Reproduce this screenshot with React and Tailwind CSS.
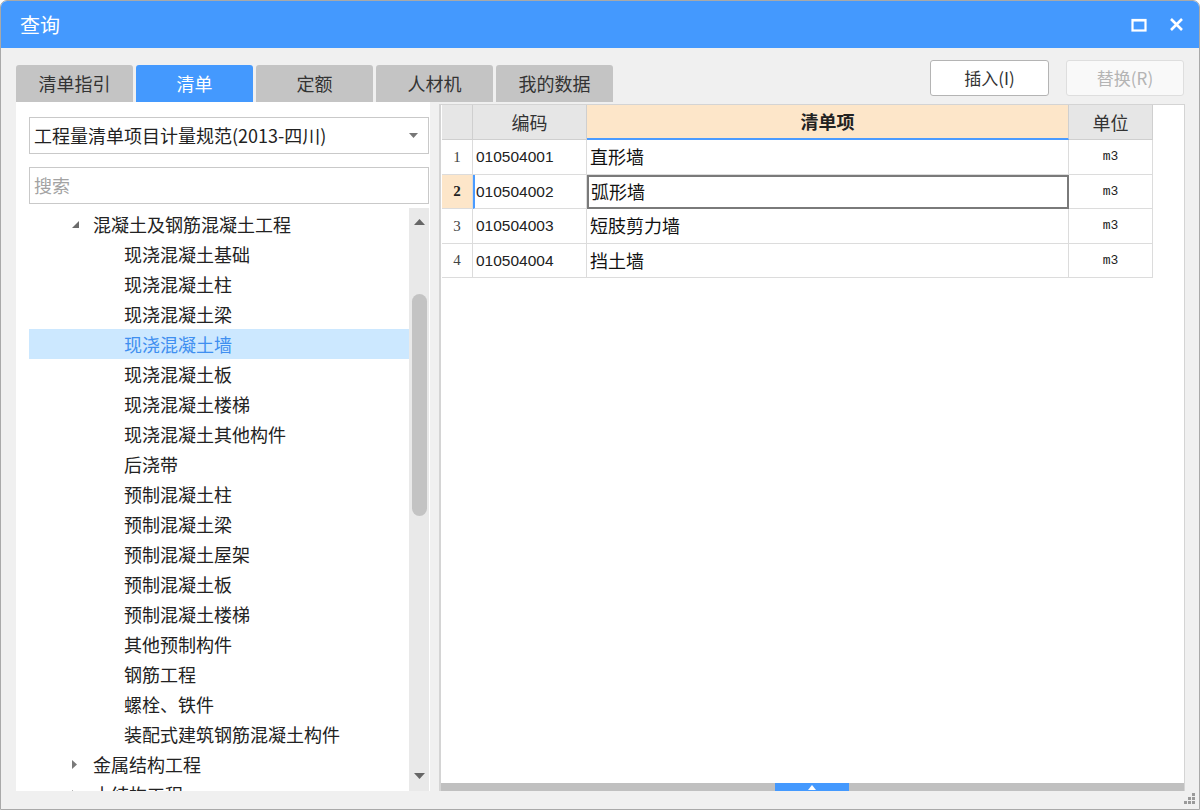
import React from 'react'

const cjk = { fontFamily: '"Noto Sans CJK SC", "Liberation Sans", sans-serif' }

const tabs = ['清单指引', '清单', '定额', '人材机', '我的数据']

const tree = [
  { label: '混凝土及钢筋混凝土工程', level: 1, open: true },
  { label: '现浇混凝土基础', level: 2 },
  { label: '现浇混凝土柱', level: 2 },
  { label: '现浇混凝土梁', level: 2 },
  { label: '现浇混凝土墙', level: 2, selected: true },
  { label: '现浇混凝土板', level: 2 },
  { label: '现浇混凝土楼梯', level: 2 },
  { label: '现浇混凝土其他构件', level: 2 },
  { label: '后浇带', level: 2 },
  { label: '预制混凝土柱', level: 2 },
  { label: '预制混凝土梁', level: 2 },
  { label: '预制混凝土屋架', level: 2 },
  { label: '预制混凝土板', level: 2 },
  { label: '预制混凝土楼梯', level: 2 },
  { label: '其他预制构件', level: 2 },
  { label: '钢筋工程', level: 2 },
  { label: '螺栓、铁件', level: 2 },
  { label: '装配式建筑钢筋混凝土构件', level: 2 },
  { label: '金属结构工程', level: 1 },
  { label: '木结构工程', level: 1 },
]

const rows = [
  { n: 1, code: '010504001', name: '直形墙', unit: 'm3' },
  { n: 2, code: '010504002', name: '弧形墙', unit: 'm3', active: true },
  { n: 3, code: '010504003', name: '短肢剪力墙', unit: 'm3' },
  { n: 4, code: '010504004', name: '挡土墙', unit: 'm3' },
]

const TreeRow = ({ item }) => (
  <div
    className={`h-[30px] flex items-center shrink-0 text-[18px] ${item.selected ? 'bg-[#cce8ff] text-[#3f8ff0]' : 'text-[#222]'}`}
  >
    {item.level === 1 ? (
      <>
        <span className="w-[42px] shrink-0" />
        <span className="w-[22px] shrink-0 flex items-center">
          {item.open ? (
            <svg width="9" height="9" viewBox="0 0 9 9"><path d="M8 1 L8 8 L1 8 Z" fill="#6b6b6b" /></svg>
          ) : (
            <svg width="7" height="11" viewBox="0 0 7 11"><path d="M1 1 L6 5.5 L1 10 Z" fill="#7a7a7a" /></svg>
          )}
        </span>
      </>
    ) : (
      <span className="w-[95px] shrink-0" />
    )}
    <span className="whitespace-nowrap leading-none">{item.label}</span>
  </div>
)

const App = () => {
  return (
    <div className="w-[1200px] h-[810px] bg-[#f0f0f0] border border-[#a9a9a9] rounded-t-[7px] overflow-hidden flex flex-col" style={cjk}>
      {/* title bar */}
      <div className="h-[47px] shrink-0 bg-[#4499fe] flex items-center justify-between pl-[19px] pr-[15px]">
        <span className="text-white text-[20px] leading-none">查询</span>
        <div className="flex items-center gap-[22px]">
          <svg width="16" height="14" viewBox="0 0 16 14">
            <rect x="1.5" y="2" width="13" height="10.5" fill="none" stroke="#fff" strokeWidth="2.2" />
            <rect x="1" y="1" width="14" height="2.5" fill="#fff" />
          </svg>
          <svg width="15" height="15" viewBox="0 0 15 15">
            <path d="M2 2 L13 13 M13 2 L2 13" stroke="#fff" strokeWidth="2.6" />
          </svg>
        </div>
      </div>

      {/* tabs + buttons */}
      <div className="h-[54px] shrink-0 flex items-end justify-between px-[15px]">
        <div className="flex gap-[3px]">
          {tabs.map((t, i) => (
            <div
              key={t}
              className={`h-[37px] w-[117px] rounded-t-[3px] flex items-center justify-center text-[18px] ${i === 1 ? 'bg-[#4499fe] text-white' : 'bg-[#c4c4c4] text-[#333]'}`}
            >
              {t}
            </div>
          ))}
        </div>
        <div className="flex gap-[17px] mb-[6px]">
          <div className="w-[119px] h-[36px] bg-white border border-[#b4b4b4] rounded-[3px] flex items-center justify-center text-[17px] text-[#333]">插入(I)</div>
          <div className="w-[118px] h-[36px] bg-[#f9f9f9] border border-[#dedede] rounded-[3px] flex items-center justify-center text-[17px] text-[#b4b4b4]">替换(R)</div>
        </div>
      </div>

      {/* main */}
      <div className="h-[689px] shrink-0 flex pl-[15px] pr-[14px] gap-[9px]">
        {/* left panel */}
        <div className="w-[414px] bg-white flex flex-col pl-[13px] pr-px pt-[15px]">
          <div className="h-[37px] shrink-0 border border-[#c9c9c9] flex items-center justify-between pl-[4px] pr-[10px] text-[18px] text-[#222]">
            <span className="whitespace-nowrap">工程量清单项目计量规范(2013-四川)</span>
            <svg width="9" height="5" viewBox="0 0 9 5"><path d="M0 0 L9 0 L4.5 5 Z" fill="#777" /></svg>
          </div>
          <div className="h-[37px] shrink-0 mt-[13px] border border-[#c9c9c9] flex items-center pl-[4px] text-[18px] text-[#a3a3a3]">
            搜索
          </div>
          <div className="flex-1 min-h-0 mt-[4px] flex overflow-hidden">
            <div className="flex-1 flex flex-col pt-px overflow-hidden">
              {tree.map((item) => (
                <TreeRow key={item.label} item={item} />
              ))}
            </div>
            <div className="w-[20px] shrink-0 bg-[#e9e9e9] flex flex-col items-center">
              <div className="h-[17px] flex items-end justify-center">
                <svg width="11" height="6" viewBox="0 0 11 6"><path d="M0 6 L5.5 0 L11 6 Z" fill="#666" /></svg>
              </div>
              <div className="h-[69px]" />
              <div className="w-[15px] h-[222px] rounded-full bg-[#c3c3c3]" />
              <div className="flex-1" />
              <div className="h-[18px] flex items-start justify-center">
                <svg width="11" height="6" viewBox="0 0 11 6"><path d="M0 0 L11 0 L5.5 6 Z" fill="#666" /></svg>
              </div>
            </div>
          </div>
        </div>

        {/* right panel */}
        <div className="flex-1 bg-white border-l-2 border-r border-t border-[#d4d4d4] mt-[2px] flex flex-col">
          <div className="flex-1 min-h-0">
            <div className="w-[712px] ml-px">
              {/* header */}
              <div className="flex h-[35px] text-[18px] text-[#333]">
                <div className="w-[31px] bg-[#e6e6e6] border-r border-b border-[#cfcfcf]" />
                <div className="w-[114px] bg-[#e6e6e6] border-r border-b border-[#cfcfcf] flex items-center justify-center">编码</div>
                <div className="w-[482px] bg-[#fde6c9] border-r border-[#cfcfcf] border-b-2 border-b-[#4a9bff] flex items-center justify-center font-bold text-[#222]">清单项</div>
                <div className="w-[84px] bg-[#e6e6e6] border-r border-b border-[#cfcfcf] flex items-center justify-center">单位</div>
              </div>
              {rows.map((r) => (
                <div key={r.n} className="flex h-[34.5px]">
                  <div
                    className={`w-[31px] border-r border-b border-[#dcdcdc] flex items-center justify-center text-[15px] ${r.active ? 'bg-[#fde6c9] font-bold text-[#222]' : 'bg-white text-[#444]'}`}
                    style={{ fontFamily: '"Liberation Serif", serif' }}
                  >
                    {r.n}
                  </div>
                  <div
                    className={`w-[114px] border-r border-b border-[#dcdcdc] flex items-center text-[15.5px] text-[#222] ${r.active ? 'border-l-2 border-l-[#4a9bff] pl-[1px]' : 'pl-[3px]'}`}
                    style={{ fontFamily: '"Liberation Sans", sans-serif' }}
                  >
                    {r.code}
                  </div>
                  <div className={`w-[482px] flex items-center text-[18px] text-[#111] ${r.active ? 'border-2 border-[#7a7a7a] pl-[2px]' : 'border-r border-b border-[#dcdcdc] pl-[3px]'}`}>
                    {r.name}
                  </div>
                  <div
                    className="w-[84px] border-r border-b border-[#dcdcdc] flex items-center justify-center text-[13px] text-[#222]"
                    style={{ fontFamily: '"Liberation Mono", monospace' }}
                  >
                    {r.unit}
                  </div>
                </div>
              ))}
            </div>
          </div>
          {/* horizontal scrollbar */}
          <div className="h-[8px] shrink-0 bg-[#c0c0c0] flex">
            <div className="w-[334px] shrink-0" />
            <div className="w-[74px] h-[8px] bg-[#4499fe] flex items-center justify-center">
              <svg width="8" height="5" viewBox="0 0 8 5"><path d="M0 5 L4 0 L8 5 Z" fill="#fff" /></svg>
            </div>
          </div>
        </div>
      </div>

      {/* bottom strip with grip */}
      <div className="flex-1 flex items-end justify-end pr-[3px] pb-[4px]">
        <svg width="12" height="12" viewBox="0 0 12 12">
          <rect x="8" y="0" width="3" height="3" fill="#9a9a9a" />
          <rect x="4" y="4" width="3" height="3" fill="#9a9a9a" />
          <rect x="8" y="4" width="3" height="3" fill="#9a9a9a" />
          <rect x="0" y="8" width="3" height="3" fill="#9a9a9a" />
          <rect x="4" y="8" width="3" height="3" fill="#9a9a9a" />
          <rect x="8" y="8" width="3" height="3" fill="#9a9a9a" />
        </svg>
      </div>
    </div>
  )
}

export default App
